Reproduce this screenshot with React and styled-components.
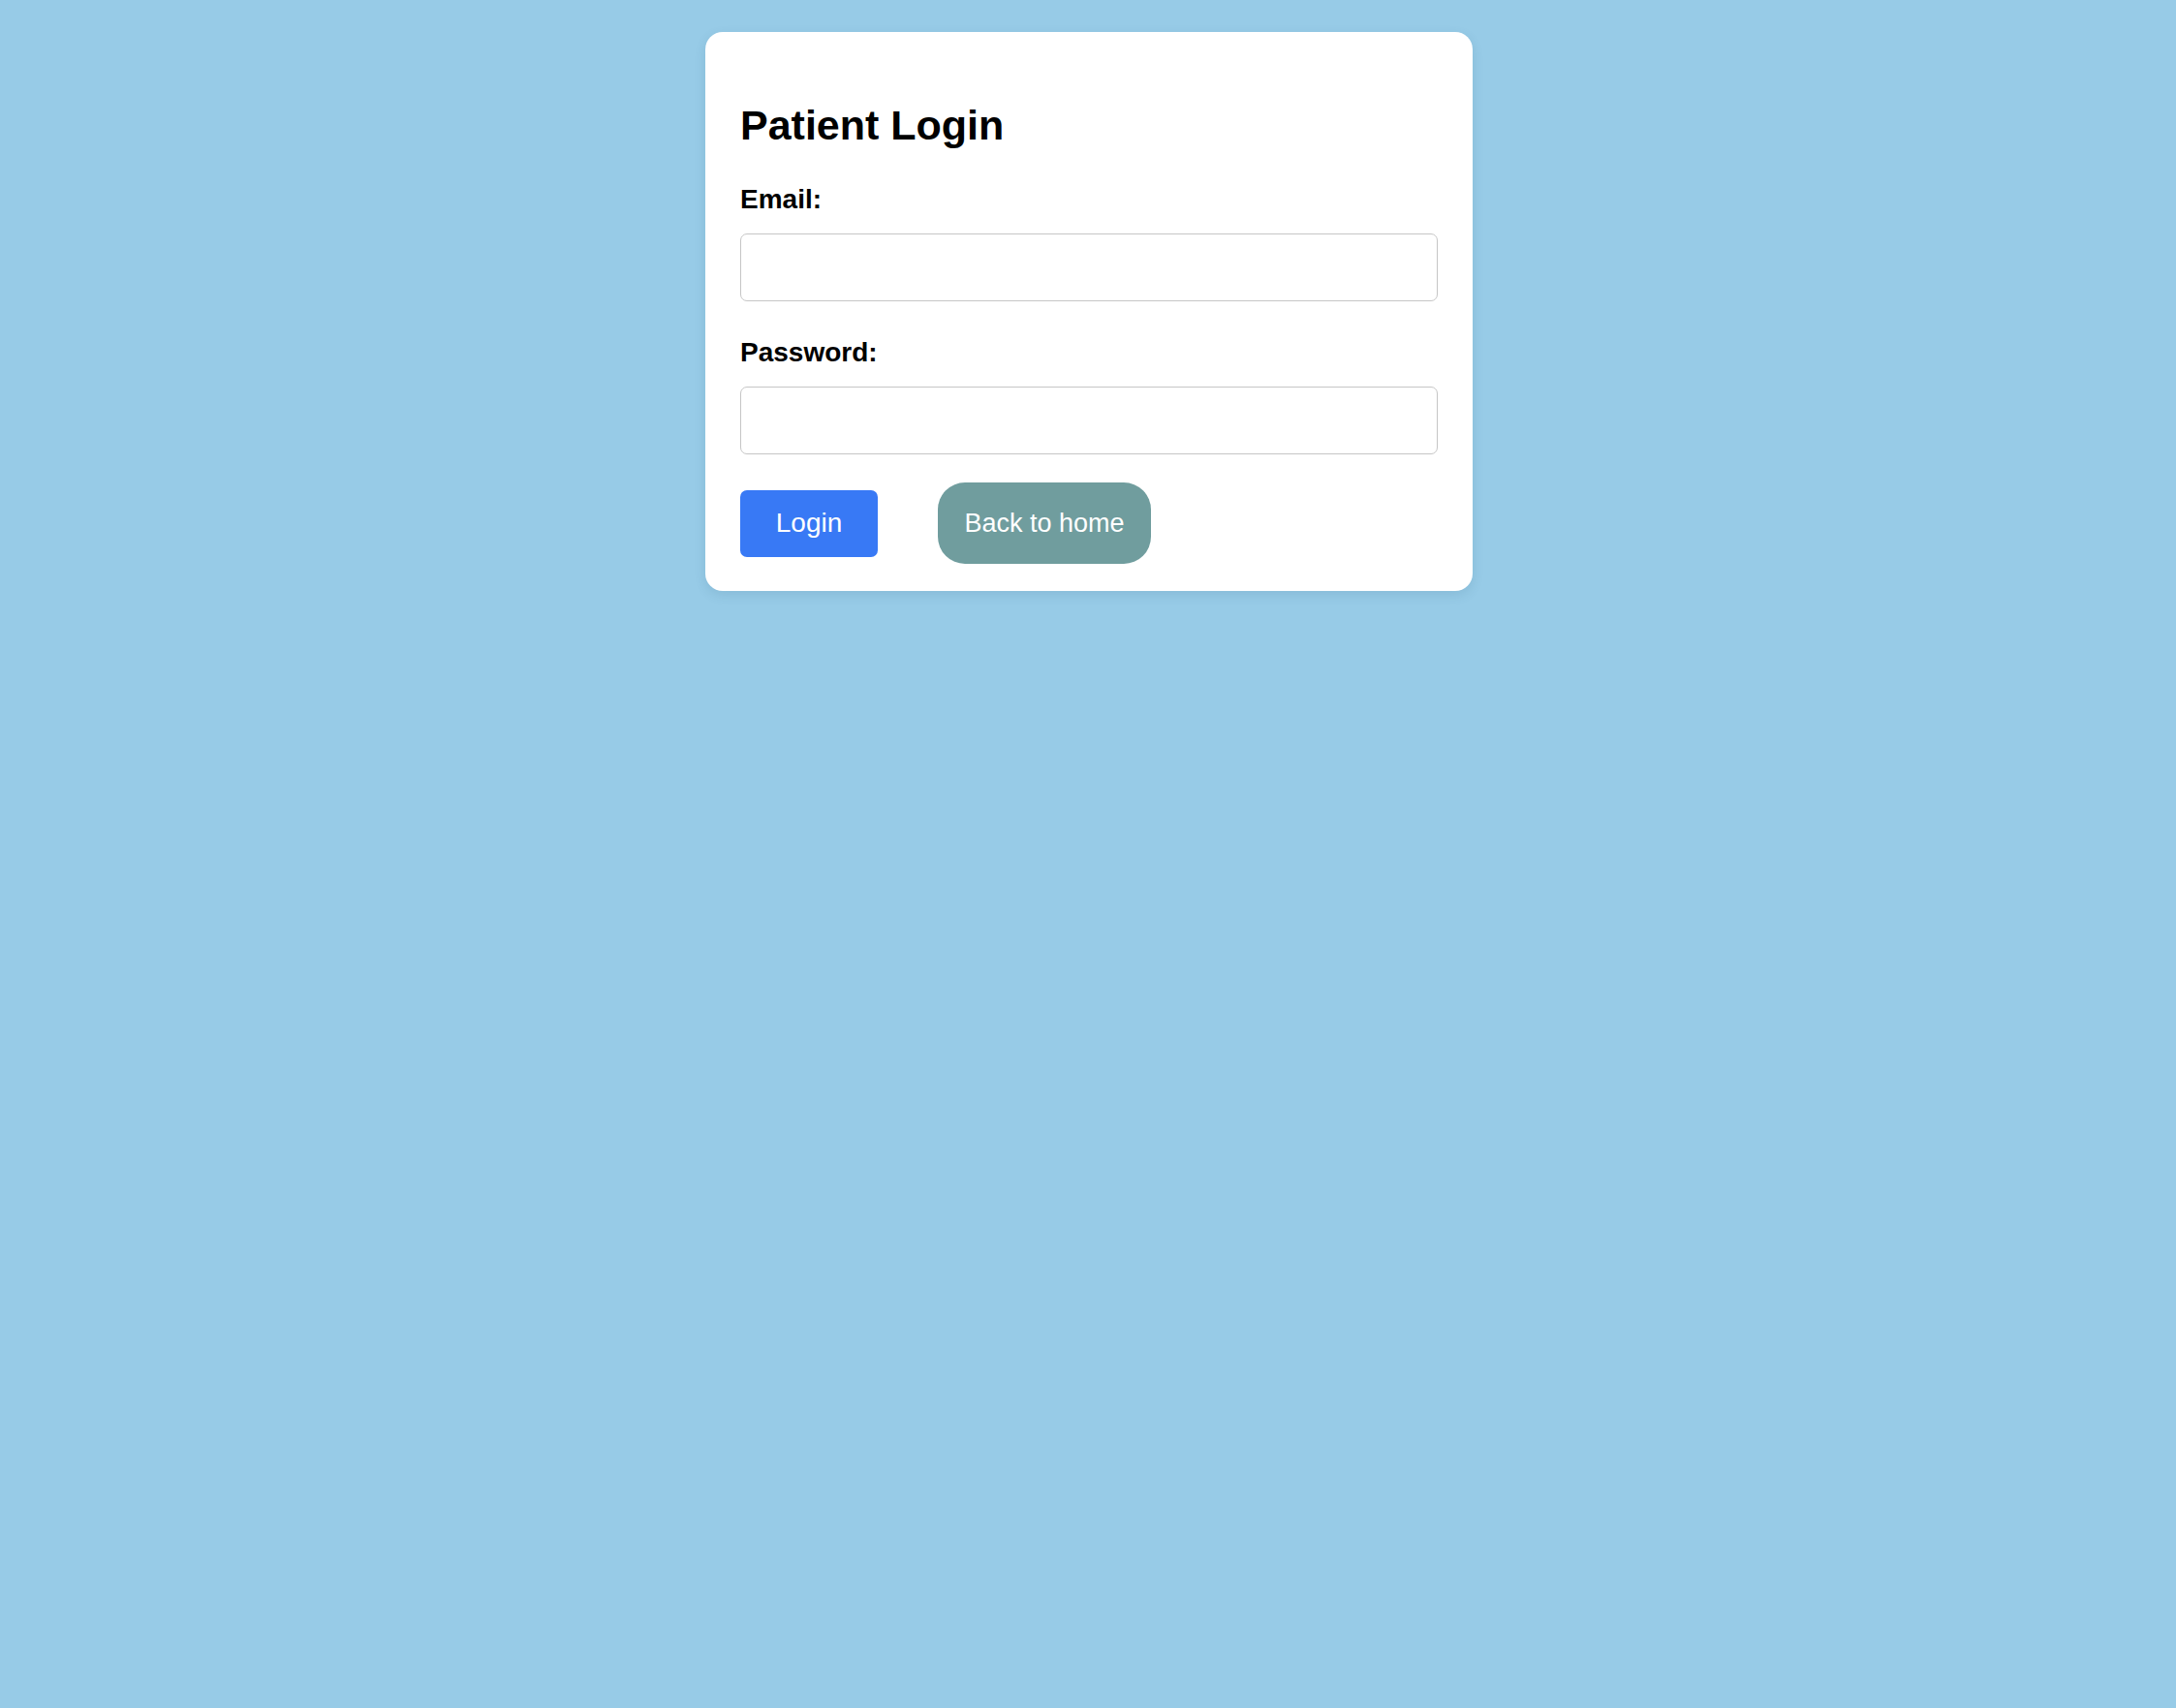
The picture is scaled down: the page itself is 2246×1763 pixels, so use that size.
import React, { useState } from 'react';
import styled, { createGlobalStyle } from 'styled-components';

const GlobalStyle = createGlobalStyle`
  html, body {
    margin: 0;
    padding: 0;
    background: #97cbe7;
    min-height: 100%;
  }
  body {
    font-family: "Liberation Sans", Arial, Helvetica, sans-serif;
  }
`;

const Page = styled.div`
  min-height: 1763px;
  display: flex;
  justify-content: center;
  align-items: flex-start;
  padding: 33px 0 0 2px;
  box-sizing: border-box;
`;

const Card = styled.form`
  width: 792px;
  box-sizing: border-box;
  background: #fff;
  border-radius: 18px;
  box-shadow: 0px 4px 12px rgba(40, 90, 120, 0.14);
  padding: 72px 36px 28px;
  display: flex;
  flex-direction: column;
`;

const Title = styled.h2`
  margin: 0 0 37px;
  font-size: 43px;
  line-height: 48px;
  font-weight: 700;
  color: #000;
`;

const Label = styled.label`
  display: block;
  font-size: 28px;
  line-height: 31px;
  font-weight: 700;
  color: #000;
  margin: ${({ first }) => (first ? '0' : '37px')} 0 20px;
`;

const Input = styled.input`
  width: 100%;
  height: 70px;
  box-sizing: border-box;
  border: 1px solid #c6c6c6;
  border-radius: 7px;
  padding: 0 16px;
  font-size: 26px;
  font-family: inherit;
  outline: none;

  &:focus {
    border-color: #3879f5;
  }
`;

const Actions = styled.div`
  display: flex;
  align-items: center;
  gap: 62px;
  margin-top: 29px;
`;

const Button = styled.button`
  border: none;
  color: #fff;
  font-family: inherit;
  cursor: pointer;
  box-sizing: border-box;
  display: flex;
  align-items: center;
  justify-content: center;
  background: ${({ variant }) => (variant === 'home' ? '#709d9e' : '#3879f5')};
  height: ${({ variant }) => (variant === 'home' ? '84px' : '69px')};
  width: ${({ variant }) => (variant === 'home' ? '220px' : '142px')};
  border-radius: ${({ variant }) => (variant === 'home' ? '28px' : '7px')};
  font-size: ${({ variant }) => (variant === 'home' ? '27px' : '28px')};
  padding: 0;
`;

const App = () => {
  const [email, setEmail] = useState('');
  const [password, setPassword] = useState('');

  return (
    <>
      <GlobalStyle />
      <Page>
        <Card onSubmit={(e) => e.preventDefault()}>
          <Title>Patient Login</Title>
          <Label first htmlFor="email">Email:</Label>
          <Input
            id="email"
            type="email"
            value={email}
            onChange={(e) => setEmail(e.target.value)}
          />
          <Label htmlFor="password">Password:</Label>
          <Input
            id="password"
            type="password"
            value={password}
            onChange={(e) => setPassword(e.target.value)}
          />
          <Actions>
            <Button type="submit">Login</Button>
            <Button type="button" variant="home">Back to home</Button>
          </Actions>
        </Card>
      </Page>
    </>
  );
};

export default App;
